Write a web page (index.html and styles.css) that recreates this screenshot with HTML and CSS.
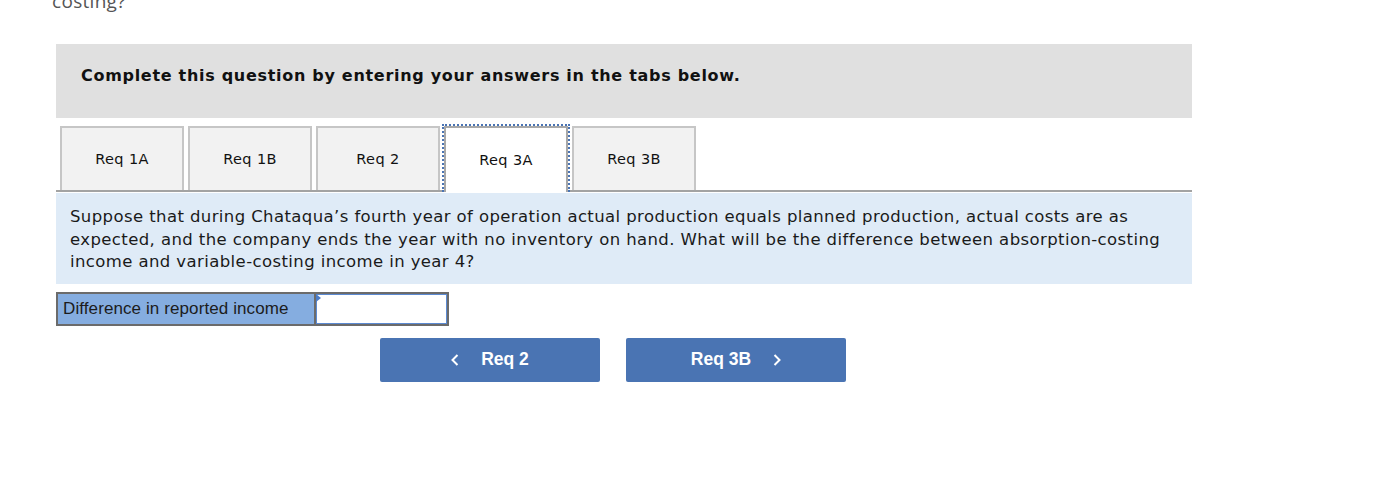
FILE: index.html
```html
<!DOCTYPE html>
<html>
<head>
<meta charset="utf-8">
<link rel="stylesheet" href="styles.css">
</head>
<body>
<div class="prev-text">costing?</div>
<div class="panel">
  <div class="instructions">Complete this question by entering your answers in the tabs below.</div>
  <div class="tabs">
    <div class="tab">Req 1A</div>
    <div class="tab">Req 1B</div>
    <div class="tab">Req 2</div>
    <div class="tab active">Req 3A</div>
    <div class="tab">Req 3B</div>
  </div>
  <div class="question">Suppose that during Chataqua’s fourth year of operation actual production equals planned production, actual costs are as expected, and the company ends the year with no inventory on hand. What will be the difference between absorption-costing income and variable-costing income in year 4?</div>
  <div class="answer-row">
    <div class="answer-label">Difference in reported income</div>
    <div class="answer-input"><span class="marker"></span></div>
  </div>
  <div class="nav">
    <button class="nav-btn"><svg class="chev" width="8" height="12" viewBox="0 0 8 12"><path d="M6.5 1 L1.5 6 L6.5 11" fill="none" stroke="#fff" stroke-width="2"/></svg><span>Req 2</span></button>
    <button class="nav-btn"><span>Req 3B</span><svg class="chev" width="8" height="12" viewBox="0 0 8 12"><path d="M1.5 1 L6.5 6 L1.5 11" fill="none" stroke="#fff" stroke-width="2"/></svg></button>
  </div>
</div>
</body>
</html>
```
FILE: styles.css
```css
html, body {
  margin: 0;
  padding: 0;
  background: #fff;
}
body {
  width: 1380px;
  height: 480px;
  overflow: hidden;
}
.prev-text {
  font-family: "Open Sans", sans-serif;
  font-size: 19px;
  line-height: 20px;
  color: #555;
  margin-top: -9px;
  padding-left: 52px;
  height: 20px;
  letter-spacing: 0.3px;
}
.panel {
  margin: 33px 0 0 56px;
  width: 1136px;
}
.instructions {
  background: #e0e0e0;
  height: 74px;
  box-sizing: border-box;
  padding: 22px 0 0 25px;
  font-family: "DejaVu Sans", Verdana, sans-serif;
  font-weight: bold;
  font-size: 16px;
  line-height: 20px;
  letter-spacing: 0.7px;
  color: #111;
}
.tabs {
  display: flex;
  align-items: flex-start;
  gap: 4px;
  margin-top: 8px;
  padding-left: 4px;
  border-bottom: 2px solid #a3a3a3;
  height: 64px;
}
.tab {
  width: 124px;
  height: 64px;
  box-sizing: border-box;
  border: 2px solid #c6c6c6;
  border-bottom: none;
  background: #f2f2f2;
  display: flex;
  align-items: center;
  justify-content: center;
  font-family: "DejaVu Sans", Verdana, sans-serif;
  font-size: 14.5px;
  letter-spacing: 0.4px;
  color: #111;
}
.tab.active {
  width: 128px;
  height: 68px;
  margin: -2px -2px 0 -2px;
  padding-top: 2px;
  background: #fff;
  border: 2px dotted #4a74b4;
  border-bottom: none;
  box-shadow: inset 2px 0 0 #a8a8a8, inset -2px 0 0 #a8a8a8, inset 0 2px 0 #a8a8a8;
}
.question {
  background: #dfebf7;
  margin-top: 1px;
  padding: 13px 14px 10px 14px;
  font-family: "DejaVu Sans", Verdana, sans-serif;
  font-size: 16.5px;
  letter-spacing: 0.4px;
  line-height: 22.5px;
  color: #1a1a1a;
}
.answer-row {
  display: inline-flex;
  margin-top: 8px;
  border: 2px solid #6b6b6b;
  height: 30px;
}
.answer-label {
  width: 258px;
  background: #85ade0;
  font-family: "Liberation Sans", Arial, sans-serif;
  font-size: 17px;
  letter-spacing: 0.1px;
  color: #1c1c1c;
  padding-left: 5px;
  box-sizing: border-box;
  display: flex;
  align-items: center;
  border-right: 2px solid #6b6b6b;
}
.answer-input {
  width: 131px;
  background: #fff;
  border: 1px solid #5b8ad2;
  box-sizing: border-box;
  position: relative;
}
.marker {
  position: absolute;
  left: -1px;
  top: -1px;
  width: 0;
  height: 0;
  border-top: 4px solid transparent;
  border-bottom: 4px solid transparent;
  border-left: 5px solid #4a7cc8;
}
.nav {
  display: flex;
  gap: 26px;
  margin-top: 12px;
  padding-left: 324px;
}
.nav-btn {
  width: 220px;
  height: 44px;
  background: #4a74b3;
  border: none;
  border-radius: 2px;
  color: #fff;
  font-family: "Liberation Sans", Arial, sans-serif;
  font-weight: bold;
  font-size: 17.5px;
  display: flex;
  align-items: center;
  justify-content: center;
  gap: 22px;
  padding: 0;
}
.chev {
  display: block;
}
```
